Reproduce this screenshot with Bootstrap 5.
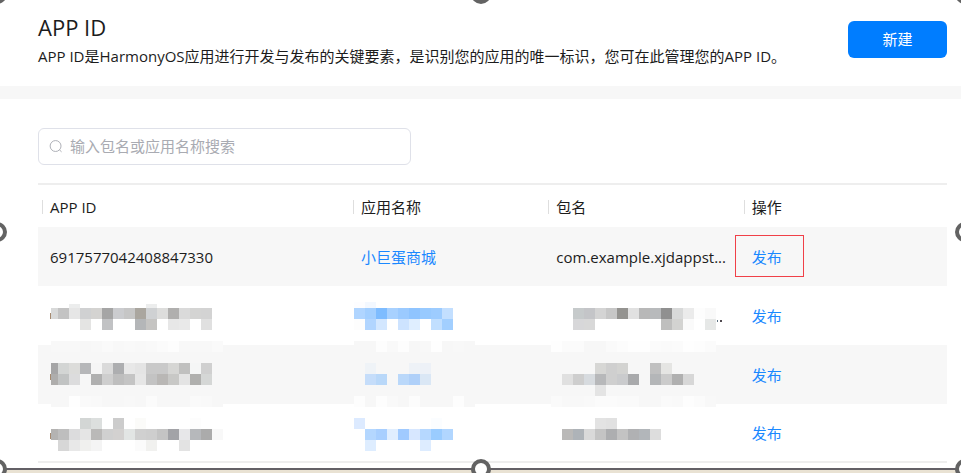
<!DOCTYPE html>
<html lang="zh-CN">
<head>
<meta charset="utf-8">
<meta name="viewport" content="width=device-width, initial-scale=1">
<title>APP ID</title>
<link href="https://cdn.jsdelivr.net/npm/bootstrap@5.3.0/dist/css/bootstrap.min.css" rel="stylesheet">
<style>
  body { font-family: "Open Sans", "Noto Sans CJK SC", sans-serif; font-size: 15px; line-height: 22px; color: #1c1c1c; }
  a { color: #1a88ff; text-decoration: none; }
  .page-head { padding: 13px 14px 19px 38px; border-bottom: 13px solid #f7f7f7; }
  .page-title { font-size: 22px; line-height: 29px; margin: 0 0 3px; font-weight: 400; }
  .btn-create { width: 99px; height: 37px; margin-top: 8px; background: #007dff; color: #fff; font-size: 15px; padding: 0; border: 0; border-radius: 6px; }
  .btn-create:hover { background: #0070e6; color: #fff; }
  .page-main { padding: 29px 14px 5px 38px; }
  .search-box { max-width: 373px; height: 37px; border: 1px solid #dfe1e9; border-radius: 6px; padding: 0 10px; gap: 7px; margin-bottom: 18px; }
  .search-box input { font-size: 15px; padding: 0; color: #1c1c1c; }
  .search-box input::placeholder { color: #a9abb2; opacity: 1; }
  .app-table { table-layout: fixed; margin: 0; border-top: 2px solid #eee; border-bottom: 2px solid #eee; color: inherit; }
  .app-table th { height: 43px; padding: 2px 0 0 4px; font-weight: 400; border: 0; vertical-align: middle; }
  .app-table th div::before { content: ""; width: 1px; height: 14px; margin-right: 7px; background: #dedede; }
  .app-table td { height: 59px; padding: 0 0 0 12px; border: 0; white-space: nowrap; }
  .app-table tr.shade td { background: #f7f7f7; }
  .col-id { width: 34.2%; }
  .col-app, .col-pkg { width: 21.5%; }
  .mosaic { display: block; width: 100%; height: 59px; overflow: visible; }
  .app-table tr:last-child td, tr:last-child .mosaic { height: 57px; }
  .callout-ring { position: absolute; inset: -12px -22px -10px -17px; border: 1px solid #f04048; }
  .bottom-strip { height: 5px; background: #e9e2d3; border-top: 2px solid #636066; }
  .sel-frame { position: absolute; inset: -6px -4px 4px -3px; pointer-events: none; }
  .sel-frame i { position: absolute; width: 20px; height: 20px; margin: -10px; border: 4px solid #636363; border-radius: 50%; background: #fff; }
</style>
</head>
<body>
<div class="position-relative overflow-hidden">
  <header class="page-head d-flex justify-content-between align-items-start">
    <div>
      <h1 class="page-title">APP ID</h1>
      <p class="mb-0">APP ID是HarmonyOS应用进行开发与发布的关键要素，是识别您的应用的唯一标识，您可在此管理您的APP ID。</p>
    </div>
    <button type="button" class="btn btn-create flex-shrink-0">新建</button>
  </header>
  <main class="page-main">
    <label class="search-box d-flex align-items-center">
      <svg width="15" height="15" viewBox="0 0 15 15" fill="none" stroke="#a9abb2" stroke-width="1" aria-hidden="true"><circle cx="7" cy="7" r="5.8"/><path d="M11 11l2.4 2.2"/></svg>
      <input type="text" class="form-control border-0 shadow-none bg-transparent" placeholder="输入包名或应用名称搜索" aria-label="搜索">
    </label>
    <table class="table app-table align-middle">
      <colgroup><col class="col-id"><col class="col-app"><col class="col-pkg"><col></colgroup>
      <thead>
        <tr>
          <th scope="col"><div class="d-flex align-items-center">APP ID</div></th>
          <th scope="col"><div class="d-flex align-items-center">应用名称</div></th>
          <th scope="col"><div class="d-flex align-items-center">包名</div></th>
          <th scope="col"><div class="d-flex align-items-center">操作</div></th>
        </tr>
      </thead>
      <tbody>
        <tr class="shade">
          <td>6917577042408847330</td>
          <td><a href="#">小巨蛋商城</a></td>
          <td>com.example.xjdappst...</td>
          <td><a href="#" class="position-relative">发布<span class="callout-ring"></span></a></td>
        </tr>
        <tr>
          <td><svg class="mosaic" data-m="a2"></svg></td>
          <td><svg class="mosaic" data-m="b2"></svg></td>
          <td><svg class="mosaic" data-m="c2"></svg></td>
          <td><a href="#">发布</a></td>
        </tr>
        <tr class="shade">
          <td><svg class="mosaic" data-m="a3"></svg></td>
          <td><svg class="mosaic" data-m="b3"></svg></td>
          <td><svg class="mosaic" data-m="c3"></svg></td>
          <td><a href="#">发布</a></td>
        </tr>
        <tr>
          <td><svg class="mosaic" data-m="a4"></svg></td>
          <td><svg class="mosaic" data-m="b4"></svg></td>
          <td><svg class="mosaic" data-m="c4"></svg></td>
          <td><a href="#">发布</a></td>
        </tr>
      </tbody>
    </table>
  </main>
  <div class="bottom-strip"></div>
  <div class="sel-frame" id="frame"></div>
</div>
<script src="https://cdn.jsdelivr.net/npm/bootstrap@5.3.0/dist/js/bootstrap.bundle.min.js"></script>
<script>
  // Redacted values: each line is [top, height, "colours of 11px blocks"], "-" leaves a block empty.
  const left = { a: -3, b: -7, c: -5 };
  const blocks = {
    a2: [[18,4,"- - eceded - - - - - - eceded"],
      [22,11,"d8d9d9 c3c3c3 e6e6e6 d0d1d2 d4d3d1 a5a5a5 cbcccf c6c6c6 aaa69f cfd1d3 dddddc b0afae dadada d4d4d3 d3d3d3"],
      [33,11,"- - - e4e4e3 - c1c2c4 - - b4b6b8 c5c4c2 - e7e7e7 e9e9e9 - e0e0e0"]],
    a3: [[-4,11,"f8f8f8 f8f8f8 f8f8f8 f7f7f7 f8f8f8 fafafa f8f8f8 f9f9f9 f8f8f8 f9f9f9 fbfbfb fdfdfd f8f8f8 f8f8f8 f8f8f8 fafafa"],
      [18,11,"a5a5a6 d3d5d4 dcdcda b6b7b9 f5f5f5 dadada adaeb0 e8e8e8 e4e4e4 c9c9c9 c9c9c9 d6d6d4 c0c0bf f5f6f6 d0d0d0"],
      [29,11,"aeadac c1c3c3 dcdcdd f7f7f7 b0b0b0 cecece bebebe c4c4c4 e6e6e6 c3c3c3 b9b7b5 c8c8c6 e4e4e4 b0b0ae d5d7d6"],
      [51,11,"f7f7f7 f7f7f7 fefefe fafafa f9f9f9 f7f7f7 f7f7f7 f8f8f8 f7f7f7 fbfbfb f7f7f7 f7f7f7 f7f7f7 fafafa f9f9f9 f7f7f7"]],
    a4: [[14,11,"- - - d3d6d5 dcdfde - cccccc - fbfbf9 - - - - fdfdfd"],
      [25,11,"b4b3b2 bebebe dcdcdd e5e5e5 bab9b8 d0d0d0 d3d1d0 e2e5e4 d0d0d0 cecece c4c4c4 a2a3a7 e7e7e9 b6b8bb ababab f8f8f8"],
      [36,11,"- d7d7d7 e8e8e8 f0f0ee f4f4f4 - - - fbfbfb f1f1ef - - e3e3e3"]],
    b2: [[16,6,"fdfdff f3f8ff"],
      [22,11,"b0d5ff a3cfff 7ebcff a8d1ff 9bcaff 8fc4ff 98caff 9dccff c3dfff"],
      [33,11,"fdfdfd b1d5ff d3e7ff - cde3ff dfeeff - c1dfff a2cfff"]],
    b3: [[-4,11,"f7f7f7 f7f7f7 fdfdfd f9f9f9 fdfdfd f7f7f7 f8f8f8 fefefe f7f7f7 f8f8f8 f7f7f7"],
      [18,11,"- eff3f7 - - - eef2f7 edf1f7"],
      [29,11,"- c5ddfa b9d8f9 - bad8fa afd0f9 dae7f5"],
      [51,11,"fdfdfd f7f7f7 fdfdfd f9f9f9 f7f7f7 fcfcfc f7f7f7 f7f7f7 f7f7f7 fdfdfd f7f7f7"]],
    b4: [[14,11,"dceaff - - - - - - fbfdff"],
      [25,11,"- b4d7ff a8cfff e0eeff a0caff d7e7ff b6d8ff 9accff b1d6ff"],
      [36,11,"- deedff - - - - ddecff"]],
    c2: [[22,11,"- - c6cacb c4c5c8 d4d4d4 c7c7c7 949390 e1e1e1 b8b8b8 b8babc 909090 d8d9d9 ebebeb fdfdfd f9f9f9"],
      [33,11,"- - d7d7d9 d8d8d8 - - - - - - bfbfbe d3d3d1 fafafa - e6e8e7"]],
    c3: [[-4,11,"fefefe fbfbfb fbfbfb f7f7f7 f7f7f7 fafafa fcfcfc fefefe fefefe fbfbfb fafafa fbfbfb fefefe fdfdfd fbfbfb"],
      [18,11,"- - - - d7d7d5 cfcfcf d3d3d1 - - c0c0c0 e5e5e3"],
      [29,11,"- e0e0e0 cecece d7dbdf b7b8ba cfcfcf cacbcd a9aaac - b4b6b8 cbcbcb b0b0b0 d7d7d7"],
      [40,11,"- - - - e4e4e4"],
      [51,11,"fafafa f8f8f8 f8f8f8 f9f9f9 fbfbfb fbfbfb fafafa fafafa f7f7f7 f7f7f7 fafafa f9f9f9 fdfdfd fbfbfb f8f8f8"]],
    c4: [[14,11,"- - - - e3e3e3 e1e1e1"],
      [25,11,"- bab9b8 aeb3b8 d9d9d9 c4c4c4 adaeb0 c3c3c3 b0b1b3 b2b6ba dddddd"]]
  };
  const rect = (x, y, w, h, c) => `<rect x="${x}" y="${y}" width="${w}" height="${h}" fill="#${c}"/>`;
  document.querySelectorAll(".mosaic").forEach(svg => {
    const key = svg.dataset.m, col = key[0];
    let out = "";
    for (const [y, h, list] of blocks[key]) {
      list.split(" ").forEach((c, i) => {
        if (c === "-") return;
        let x = left[col] + i * 11, w = 11;
        if (col === "a" && i === 0) { x = 1; w = 7; }
        out += rect(x, y, w, h, c);
      });
    }
    if (col === "a") out += rect(0, key === "a2" ? 27 : 29, 1, 6, "a58a70");
    if (key === "c2") out += rect(161, 34, 1, 2, "5a7080") + rect(164, 34, 2, 2, "504a50");
    svg.innerHTML = out;
  });
  // Selection handles at corners and edge midpoints.
  const frame = document.getElementById("frame");
  for (const y of [0, 50, 100]) for (const x of [0, 50, 100]) {
    if (x === 50 && y === 50) continue;
    const dot = document.createElement("i");
    dot.style.left = x + "%";
    dot.style.top = y + "%";
    frame.append(dot);
  }
</script>
</body>
</html>
